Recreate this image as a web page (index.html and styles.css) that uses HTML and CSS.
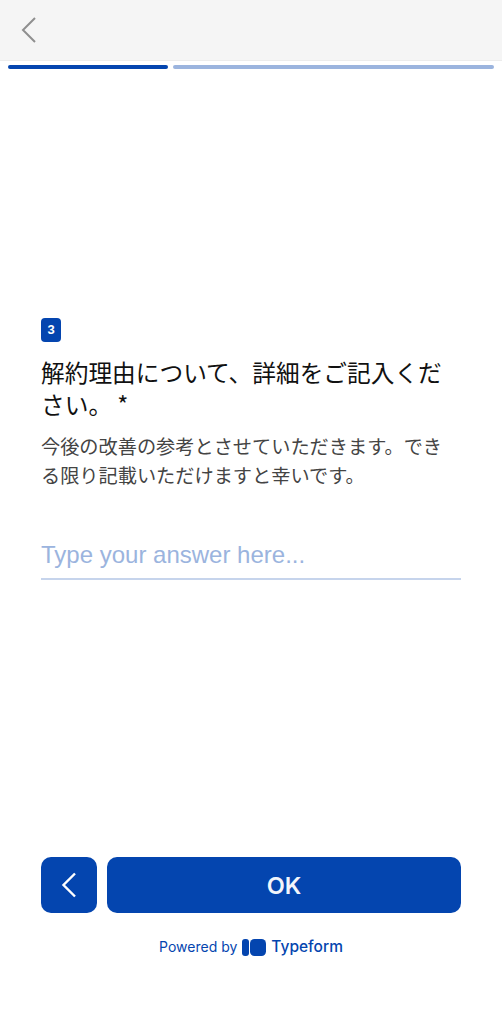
FILE: index.html
```html
<!DOCTYPE html>
<html lang="ja">
<head>
    <meta charset="UTF-8">
    <title>Typeform</title>
    <link rel="stylesheet" href="styles.css">
</head>
<body>
    <div class="top_bar">
        <svg class="top_back" width="16" height="28" viewBox="0 0 16 28"><path d="M14 2 L2 14 L14 26" fill="none" stroke="#8f8f8f" stroke-width="2"/></svg>
    </div>
    <div class="progress">
        <div class="progress_done"></div>
        <div class="progress_rest"></div>
    </div>
    <div class="question">
        <div class="num">3</div>
        <h1>解約理由について、詳細をご記入くだ<br>さい。 *</h1>
        <p>今後の改善の参考とさせていただきます。でき<br>る限り記載いただけますと幸いです。</p>
        <div class="answer">Type your answer here...</div>
    </div>
    <div class="btns">
        <div class="btn_back">
            <svg width="16" height="26" viewBox="0 0 16 26"><path d="M14 1.5 L2.5 13 L14 24.5" fill="none" stroke="#fff" stroke-width="2.4"/></svg>
        </div>
        <div class="btn_ok">OK</div>
    </div>
    <div class="powered">
        <span>Powered by</span>
        <svg width="24" height="17" viewBox="0 0 24 17"><rect x="0" y="0" width="7" height="17" rx="3" fill="#0445af"/><rect x="8" y="0" width="16" height="17" rx="4.5" fill="#0445af"/></svg>
        <b>Typeform</b>
    </div>
</body>
</html>
```

FILE: styles.css
```css
body{
    margin: 0;
    width: 502px;
    height: 1024px;
    overflow: hidden;
    background-color: #fff;
    font-family: "Inter", "Liberation Sans", "Noto Sans CJK JP", sans-serif;
}
.top_bar{
    height: 60px;
    background-color: #f5f5f5;
    border-bottom: 1px solid #ececec;
    display: flex;
    align-items: center;
    padding-left: 21px;
}
.progress{
    display: flex;
    gap: 5px;
    margin: 4px 8px 0;
}
.progress div{
    height: 4px;
    border-radius: 2px;
}
.progress_done{
    width: 160px;
    background-color: #0445af;
}
.progress_rest{
    width: 321px;
    background-color: #9bb4de;
}
.question{
    margin: 249px 41px 0;
    height: 539px;
}
.num{
    width: 20px;
    height: 24px;
    border-radius: 4px;
    background-color: #0445af;
    color: #fff;
    font-size: 13px;
    font-weight: 700;
    line-height: 24px;
    text-align: center;
    font-family: "Liberation Sans", sans-serif;
}
.question h1{
    margin: 14px 0 0;
    font-size: 23.7px;
    line-height: 32px;
    font-weight: 400;
    color: #111;
    font-family: "Noto Sans CJK JP", sans-serif;
}
.question p{
    margin: 12px 0 0;
    font-size: 19.2px;
    line-height: 29px;
    color: #444;
    font-family: "Noto Sans CJK JP", sans-serif;
}
.answer{
    margin-top: 47px;
    padding-bottom: 5px;
    width: 420px;
    border-bottom: 2px solid #c6d4ec;
    color: #9bb4de;
    font-size: 24px;
    line-height: 36px;
    font-family: "Liberation Sans", sans-serif;
}
.btns{
    display: flex;
    gap: 10px;
    margin: 0 41px;
    height: 56px;
}
.btn_back{
    width: 56px;
    border-radius: 10px;
    background-color: #0445af;
    display: flex;
    align-items: center;
    justify-content: center;
    padding-right: 1px;
    box-sizing: border-box;
}
.btn_ok{
    flex: 1;
    border-radius: 10px;
    background-color: #0445af;
    color: #f2f5fb;
    font-size: 23.5px;
    font-weight: 600;
    line-height: 58px;
    text-align: center;
}
.powered{
    display: flex;
    align-items: center;
    justify-content: center;
    gap: 5px;
    margin-top: 25px;
    color: #0445af;
    font-size: 14px;
    line-height: 18px;
}
.powered b{
    font-size: 15.5px;
    font-weight: 500;
}
```
